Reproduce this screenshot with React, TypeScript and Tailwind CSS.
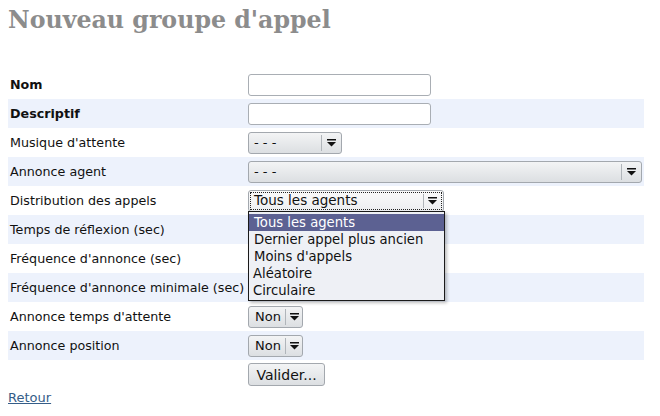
import React from 'react';

type Row = { label: string; bold?: boolean; field: React.ReactNode };

const Arrow = () => (
  <svg width="9" height="8" viewBox="0 0 9 8" className="block">
    <rect x="0" y="0" width="9" height="1.5" fill="#111" />
    <path d="M0 3 L9 3 L4.5 7.5 Z" fill="#111" />
  </svg>
);

const TextInput = () => (
  <div className="w-[183px] h-[22px] bg-white border border-[#a9aeb4] rounded-[3px]" />
);

const Combo = ({ value, w, big }: { value: string; w: string; big?: boolean }) => (
  <div
    className={`${w} h-[22px] flex items-stretch border border-[#a3a8ae] rounded-[3px] bg-gradient-to-b from-[#f3f4f5] to-[#dcdfe2]`}
  >
    <div className={`flex-1 flex items-center ${big ? 'pl-[6px] text-[13px]' : 'pl-[5px] text-[13px]'} text-[#111] whitespace-nowrap`}>
      {value}
    </div>
    <div className="w-[1px] my-[2px] bg-[#b0b5ba]" />
    <div className={`${big ? 'w-[16px]' : 'w-[19px]'} flex items-center justify-center`}>
      <Arrow />
    </div>
  </div>
);

const Distribution = () => (
  <div className="relative">
    <div className="w-[196px] h-[22px] flex items-stretch border border-[#a3a8ae] rounded-[3px] bg-gradient-to-b from-[#fafafa] to-[#eceef0] p-[1px]">
      <div className="flex-1 flex items-stretch border border-dotted border-[#222]">
        <div className="flex-1 flex items-center pl-[3px] text-[13.5px] text-[#111]">Tous les agents</div>
        <div className="w-[1px] my-[1px] bg-[#b0b5ba]" />
        <div className="w-[17px] flex items-center justify-center">
          <Arrow />
        </div>
      </div>
    </div>
    <div className="absolute left-0 top-[21px] w-[197px] bg-[#eef0f5] border border-[#1a1a1a] shadow-[2px_2px_3px_rgba(0,0,0,0.25)] z-10 pt-[2px] pb-[1px] text-[13.2px] leading-[17px] text-[#111]">
      <div className="bg-[#5c6192] text-white px-[5px]">Tous les agents</div>
      <div className="px-[5px]">Dernier appel plus ancien</div>
      <div className="px-[5px]">Moins d'appels</div>
      <div className="px-[4px]">Aléatoire</div>
      <div className="px-[4px]">Circulaire</div>
    </div>
  </div>
);

export default function App() {
  const rows: Row[] = [
    { label: 'Nom', bold: true, field: <TextInput /> },
    { label: 'Descriptif', bold: true, field: <TextInput /> },
    { label: "Musique d'attente", field: <Combo value="- - -" w="w-[94px]" /> },
    { label: 'Annonce agent', field: <Combo value="- - -" w="w-[394px]" /> },
    { label: 'Distribution des appels', field: <Distribution /> },
    { label: 'Temps de réflexion (sec)', field: null },
    { label: "Fréquence d'annonce (sec)", field: null },
    { label: "Fréquence d'annonce minimale (sec)", field: null },
    { label: "Annonce temps d'attente", field: <Combo value="Non" w="w-[55px]" big /> },
    { label: 'Annonce position', field: <Combo value="Non" w="w-[55px]" big /> },
  ];

  return (
    <div className="w-[660px] h-[416px] bg-white overflow-hidden px-2 font-['DejaVu_Sans',sans-serif]">
      <h1 className="pt-[5px] h-[70px] font-['DejaVu_Serif',serif] font-bold text-[23.7px] leading-[30px] text-[#8c8c8c] whitespace-nowrap">
        Nouveau groupe d'appel
      </h1>
      <div className="w-[636px]">
        {rows.map((r, i) => (
          <div
            key={r.label}
            className={`h-[29px] flex items-center ${i % 2 === 1 ? 'bg-[#edf2fc]' : 'bg-white'}`}
          >
            <div className={`w-[240px] shrink-0 pl-[2px] text-[12.7px] text-[#111] whitespace-nowrap ${r.bold ? 'font-bold' : ''}`}>
              {r.label}
            </div>
            <div>{r.field}</div>
          </div>
        ))}
        <div className="h-[29px] flex items-center">
          <div className="w-[240px]" />
          <button className="w-[77px] h-[23px] border border-[#a3a8ae] rounded-[3px] bg-gradient-to-b from-[#f3f4f5] to-[#dcdfe2] text-[14px] text-[#111] leading-none">
            Valider...
          </button>
        </div>
      </div>
      <a href="#" className="block -mt-[1px] text-[13px] text-[#355d88] underline">
        Retour
      </a>
    </div>
  );
}
